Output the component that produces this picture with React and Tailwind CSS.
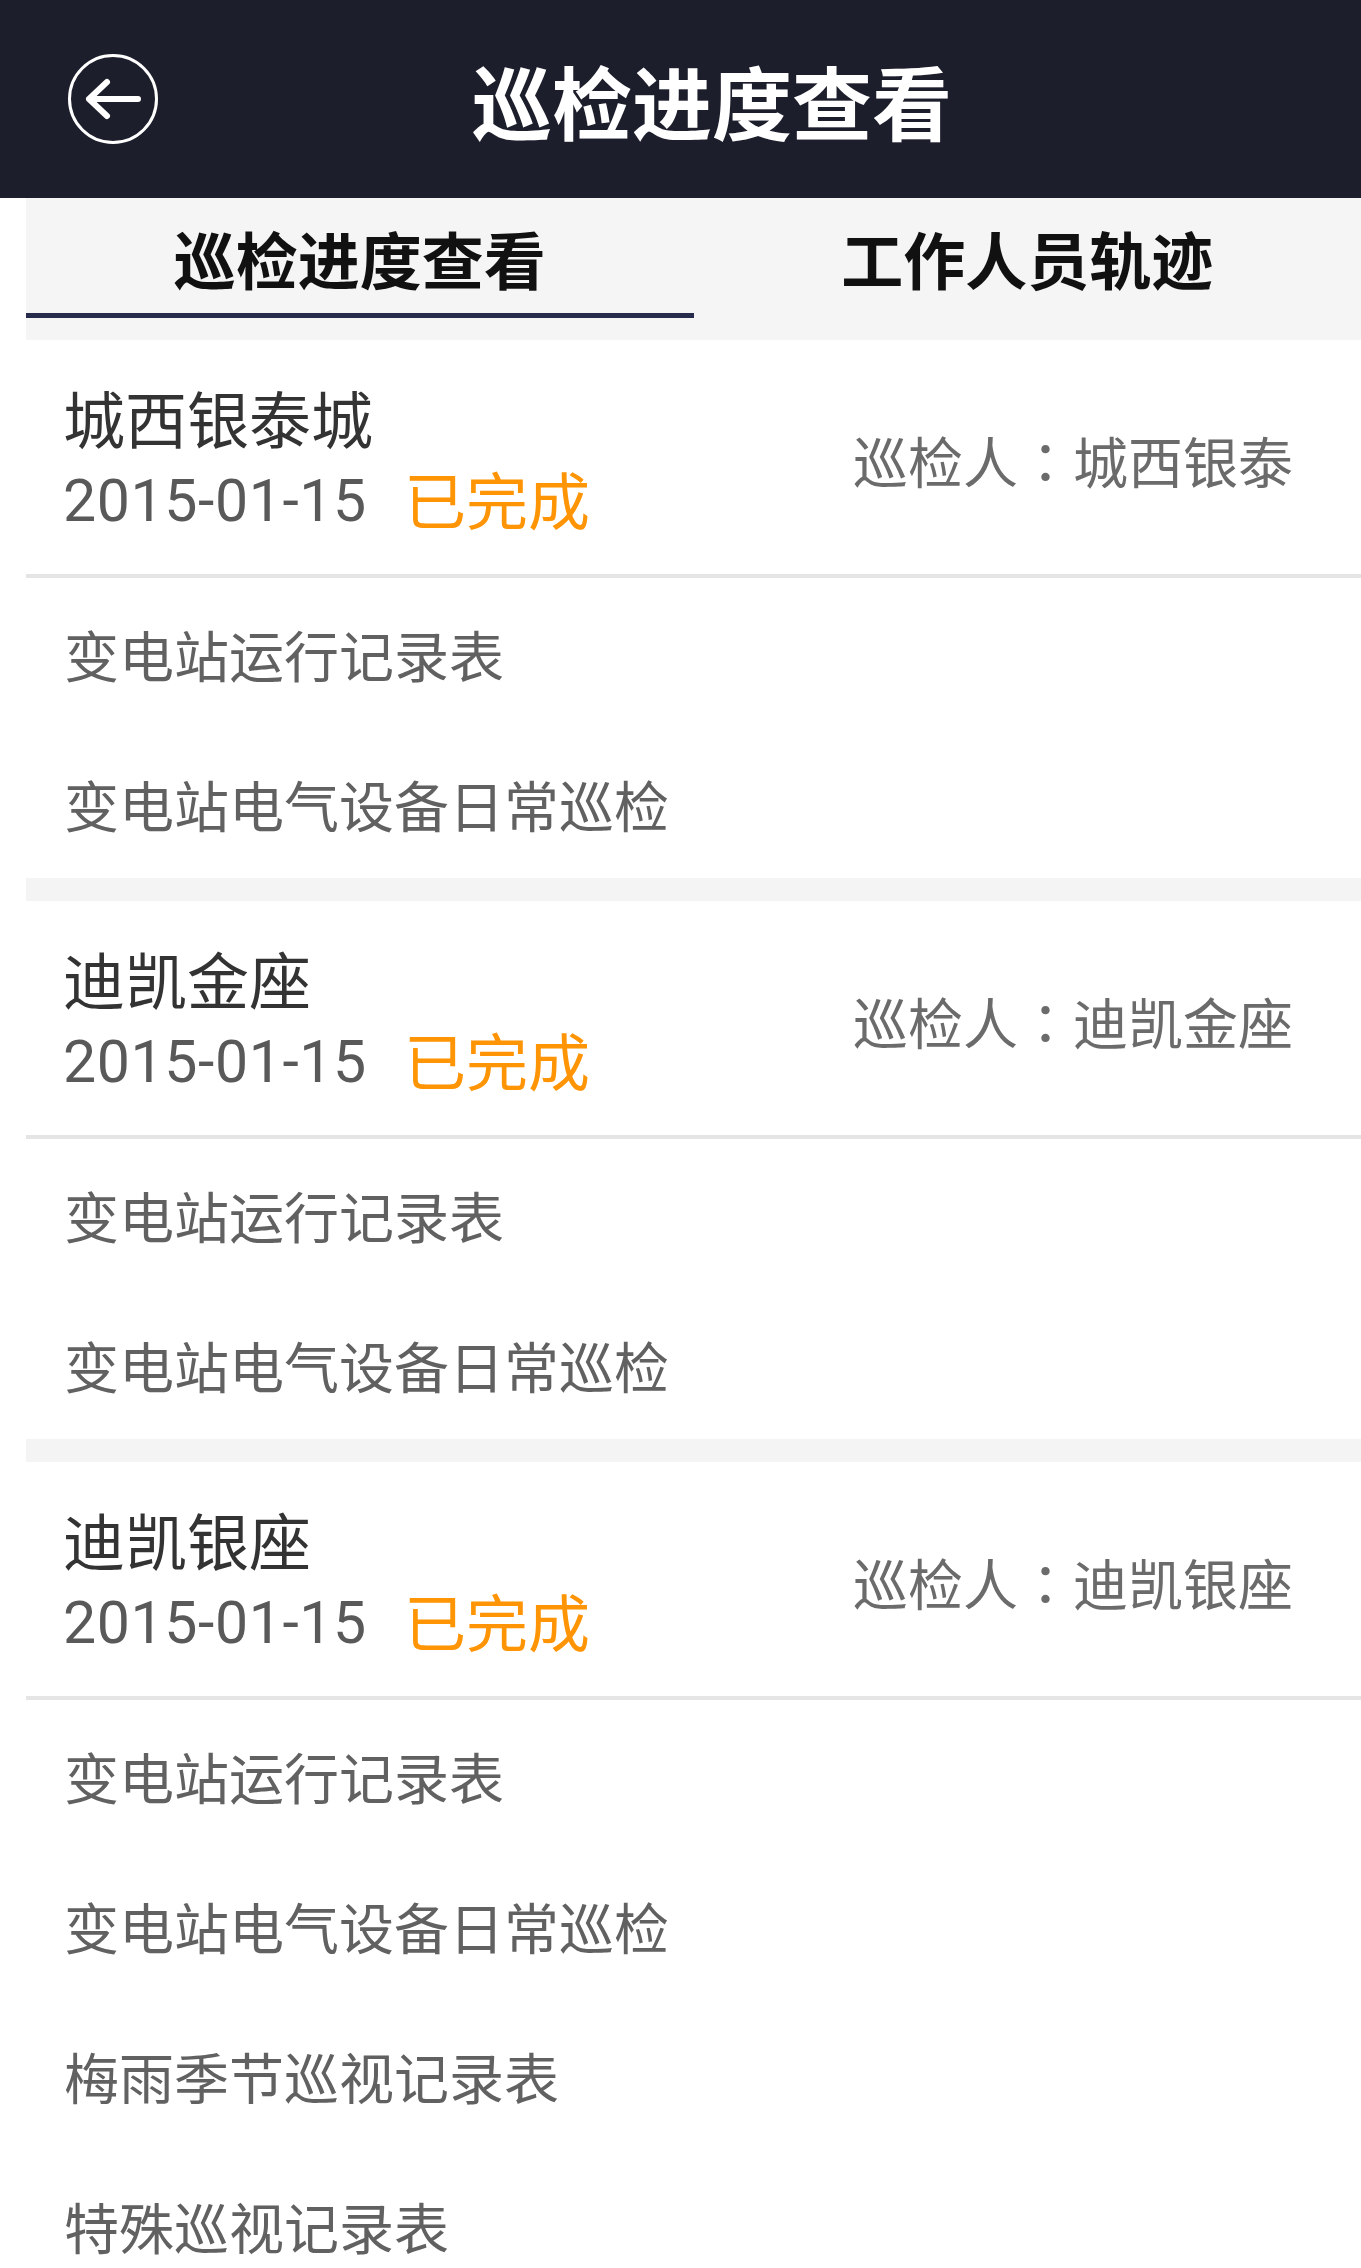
import React from 'react';

const FONT = { fontFamily: '"Noto Sans CJK SC", "Noto Sans", sans-serif' };
const NUM = { fontFamily: 'Roboto, "Noto Sans CJK SC", sans-serif' };
const COLON = { fontFamily: '"Noto Sans CJK TC", "Noto Sans CJK SC", sans-serif' };

const sites = [
  { name: '城西银泰城', date: '2015-01-15', person: '城西银泰', forms: ['变电站运行记录表', '变电站电气设备日常巡检'] },
  { name: '迪凯金座', date: '2015-01-15', person: '迪凯金座', forms: ['变电站运行记录表', '变电站电气设备日常巡检'] },
  {
    name: '迪凯银座',
    date: '2015-01-15',
    person: '迪凯银座',
    forms: ['变电站运行记录表', '变电站电气设备日常巡检', '梅雨季节巡视记录表', '特殊巡视记录表'],
  },
];

const BackIcon = () => (
  <svg width="90" height="90" viewBox="0 0 90 90" fill="none">
    <circle cx="45" cy="45" r="43.5" stroke="white" strokeWidth="3" />
    <path d="M70 45 H21 M39 28 L21 45 L39 62" stroke="white" strokeWidth="6" strokeLinecap="round" strokeLinejoin="round" />
  </svg>
);

const SiteCard = ({ site }) => (
  <div className="bg-white">
    <div className="h-[234px] flex items-center justify-between pl-[37px] pr-[68px]">
      <div className="flex flex-col">
        <div className="text-[62px] leading-[78px] text-[#333333] pt-[3px]">{site.name}</div>
        <div className="flex items-center leading-[78px]">
          <span className="text-[59px] tracking-[0.6px] text-[#595959] pt-[6px]" style={NUM}>{site.date}</span>
          <span className="ml-[37px] text-[62px] text-[#ff9405]">已完成</span>
        </div>
      </div>
      <div className="text-[55px] text-[#6b6b6b] mt-[4px]">
        巡检人<span style={COLON}>：</span>{site.person}
      </div>
    </div>
    <div className="h-[4px] bg-[#e5e5e5]" />
    {site.forms.map((f) => (
      <div key={f} className="h-[150px] flex items-center pl-[38px] text-[55px] text-[#616161]">
        {f}
      </div>
    ))}
  </div>
);

export default function App() {
  return (
    <div className="w-[1361px] min-h-[2268px] bg-white overflow-hidden" style={FONT}>
      <div className="h-[198px] bg-[#1c1e2b] flex items-center pl-[68px] pr-[95px]">
        <BackIcon />
        <div className="flex-1 text-center text-white font-bold text-[80px] leading-none">巡检进度查看</div>
      </div>
      <div className="pl-[26px]">
        <div className="h-[142px] bg-[#f5f5f5] flex">
          <div className="flex-1 flex flex-col items-center">
            <div className="h-[115px] flex items-center pt-[6px] text-[62px] font-bold text-[#111111]">巡检进度查看</div>
            <div className="h-[5px] w-full bg-[#272c4c]" />
          </div>
          <div className="flex-1 flex flex-col items-center">
            <div className="h-[115px] flex items-center pt-[6px] text-[62px] font-bold text-[#111111]">工作人员轨迹</div>
          </div>
        </div>
        <div className="flex flex-col gap-[23px] bg-[#f4f4f4]">
          {sites.map((s) => (
            <SiteCard key={s.name} site={s} />
          ))}
        </div>
      </div>
    </div>
  );
}
